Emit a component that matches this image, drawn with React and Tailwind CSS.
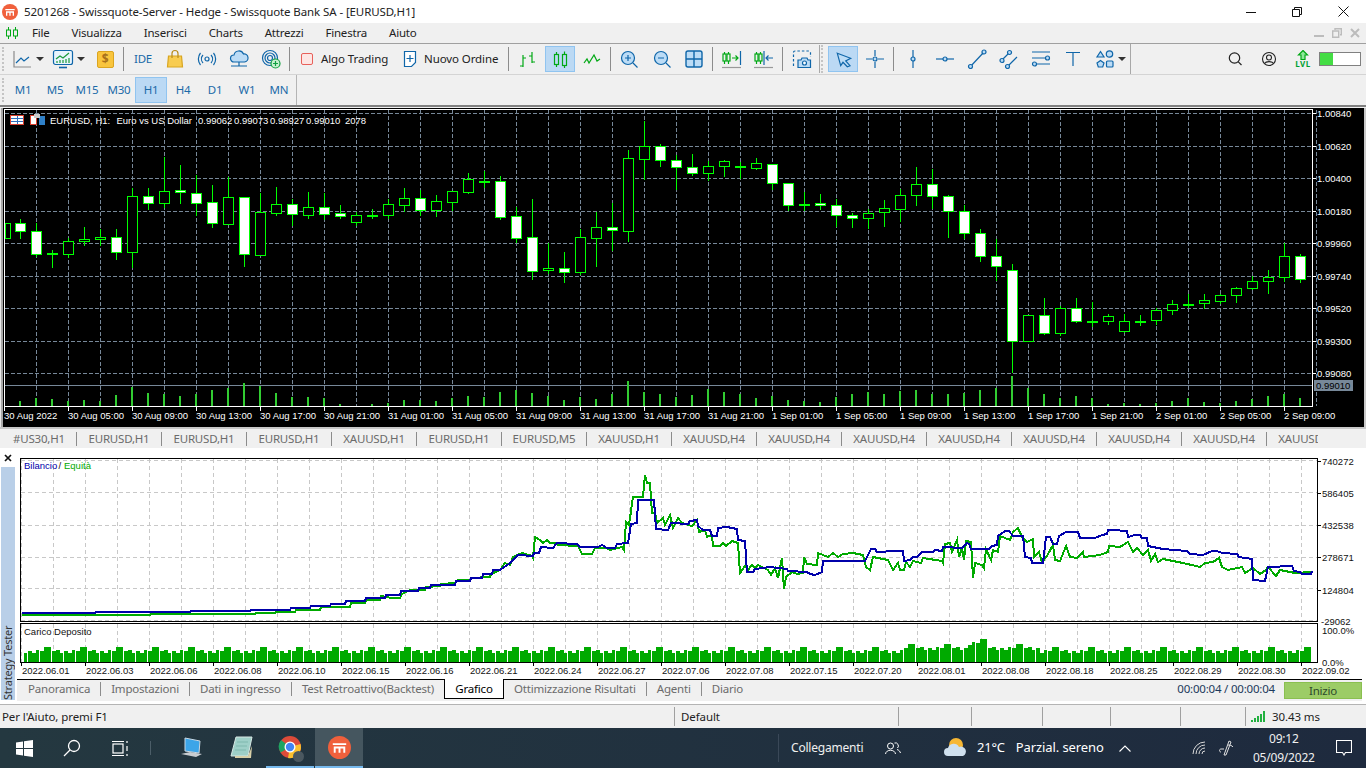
import { Fragment } from 'react'

const BLUE = '#0f66a9'
const SKY = '#bcdcf6'
const GREEN = '#00a814'

// [wick top, wick bottom, body top, body bottom, white]
const candles = [
  [223, 238, 223, 238, 0], [219, 238, 223, 231, 1], [223, 256, 231, 254, 1], [250, 267, 253, 253, 1], [238, 257, 241, 254, 0],
  [227, 245, 239, 241, 0], [229, 245, 237, 239, 0], [229, 259, 237, 252, 1], [188, 267, 196, 252, 0], [188, 209, 196, 203, 1],
  [157, 207, 191, 203, 0], [165, 203, 190, 192, 1], [175, 215, 193, 203, 1], [185, 227, 202, 223, 1], [177, 224, 197, 224, 0],
  [197, 266, 197, 254, 1], [193, 255, 212, 255, 0], [187, 215, 204, 213, 0], [199, 225, 204, 214, 1], [192, 218, 207, 215, 0],
  [193, 219, 207, 214, 1], [205, 218, 213, 216, 1], [212, 225, 215, 222, 0], [209, 218, 215, 215, 1], [199, 218, 204, 215, 0],
  [188, 211, 198, 205, 0], [190, 215, 198, 210, 1], [195, 216, 201, 210, 0], [191, 210, 191, 202, 0], [173, 193, 179, 192, 0],
  [171, 187, 181, 181, 1], [176, 219, 181, 217, 1], [207, 242, 216, 238, 1], [199, 279, 237, 271, 1], [243, 273, 268, 270, 0],
  [252, 282, 268, 272, 1], [229, 274, 237, 272, 0], [212, 266, 227, 238, 0], [203, 250, 227, 230, 1], [150, 241, 158, 231, 0],
  [121, 179, 146, 159, 0], [144, 166, 146, 160, 1], [155, 189, 160, 167, 1], [154, 175, 167, 173, 1], [161, 180, 166, 173, 0],
  [160, 176, 161, 166, 0], [162, 178, 166, 166, 1], [158, 169, 163, 168, 0], [164, 189, 164, 183, 1], [183, 210, 183, 205, 1],
  [192, 210, 204, 204, 1], [194, 209, 203, 205, 1], [199, 226, 205, 215, 1], [213, 227, 215, 218, 1], [209, 228, 213, 218, 0],
  [200, 226, 208, 212, 0], [189, 221, 195, 209, 0], [167, 205, 184, 195, 0], [169, 208, 184, 196, 1], [195, 237, 196, 211, 1],
  [205, 238, 211, 233, 1], [229, 261, 233, 256, 1], [239, 280, 256, 266, 1], [264, 372, 270, 341, 1], [315, 341, 315, 341, 0],
  [298, 334, 315, 333, 1], [306, 335, 308, 333, 0], [298, 322, 308, 321, 1], [302, 326, 321, 321, 0], [314, 324, 316, 321, 0],
  [314, 332, 321, 331, 0], [315, 325, 321, 321, 1], [308, 324, 310, 320, 0], [300, 314, 304, 310, 0], [294, 307, 304, 304, 1],
  [294, 308, 300, 303, 0], [294, 303, 295, 301, 0], [287, 302, 288, 295, 0], [276, 289, 281, 288, 0], [270, 293, 277, 281, 0],
  [243, 281, 256, 277, 0], [254, 282, 256, 279, 1],
]

const volumes = [
  0, 5, 8, 7, 5, 6, 5, 11, 19, 13, 12, 10, 12, 16, 18, 23, 20, 13, 9, 9, 8, 2, 0, 2, 3, 6, 6, 5,
  8, 10, 9, 14, 16, 13, 10, 6, 9, 7, 12, 25, 14, 12, 9, 11, 17, 14, 12, 8, 10, 6, 5, 4, 9, 12, 14,
  12, 15, 16, 12, 12, 13, 16, 18, 30, 18, 12, 8, 10, 8, 2, 3, 2, 3, 5, 8, 4, 3, 5, 7, 10, 12, 8,
]

const priceLabels = [
  [113, '1.00840'], [146, '1.00620'], [178, '1.00400'], [211, '1.00180'], [243, '0.99960'],
  [276, '0.99740'], [308, '0.99520'], [341, '0.99300'], [373, '0.99080'],
]

const timeLabels = [
  '30 Aug 2022', '30 Aug 05:00', '30 Aug 09:00', '30 Aug 13:00', '30 Aug 17:00', '30 Aug 21:00', '31 Aug 01:00',
  '31 Aug 05:00', '31 Aug 09:00', '31 Aug 13:00', '31 Aug 17:00', '31 Aug 21:00', '1 Sep 01:00', '1 Sep 05:00',
  '1 Sep 09:00', '1 Sep 13:00', '1 Sep 17:00', '1 Sep 21:00', '2 Sep 01:00', '2 Sep 05:00', '2 Sep 09:00',
]

const chartTabs = ['#US30,H1', 'EURUSD,H1', 'EURUSD,H1', 'EURUSD,H1', 'XAUUSD,H1', 'EURUSD,H1', 'EURUSD,M5', 'XAUUSD,H1', 'XAUUSD,H4', 'XAUUSD,H4', 'XAUUSD,H4', 'XAUUSD,H4', 'XAUUSD,H4', 'XAUUSD,H4', 'XAUUSD,H4', 'XAUUSD,H4']

const dateLabels = ['06.01', '06.03', '06.06', '06.08', '06.10', '06.15', '06.16', '06.21', '06.24', '06.27', '07.06', '07.08', '07.15', '07.20', '08.01', '08.08', '08.18', '08.25', '08.29', '08.30', '09.02']

const balance = '22,613 95,613 96,612 190,612 191,611 250,611 251,610 290,610 291,608 310,608 311,606 330,606 331,604 345,604 346,601 365,601 366,598 385,598 386,595 400,595 401,591 418,591 419,588 430,588 431,585 455,585 456,581 470,581 471,578 482,578 483,574 492,574 493,570 500,570 510,563 518,555 533,556 534,553 539,553 541,547 553,548 557,543 577,544 580,547 598,547 602,545 607,548 615,548 617,544 628,543 631,524 637,523 638,500 654,500 656,529 668,530 671,523 688,524 690,521 697,520 698,526 703,530 710,530 712,536 717,536 718,528 727,527 737,529 738,540 745,541 747,572 753,572 755,569 770,567 787,569 788,571 807,572 810,574 815,575 822,572 823,561 865,561 868,555 871,549 875,549 877,552 885,552 887,551 903,551 904,561 910,560 913,557 917,557 922,552 933,552 935,550 942,551 943,547 962,548 967,543 969,544 971,549 989,549 992,546 997,545 998,536 1005,531 1009,531 1013,536 1023,536 1025,557 1031,558 1032,563 1043,563 1046,537 1050,537 1053,544 1057,544 1059,536 1066,532 1078,532 1080,538 1095,538 1102,535 1107,534 1108,530 1113,530 1127,531 1128,537 1135,535 1140,535 1142,538 1147,538 1148,546 1153,547 1163,549 1187,551 1190,554 1203,555 1212,551 1217,551 1222,553 1237,554 1239,557 1252,559 1253,580 1265,581 1268,567 1292,566 1294,571 1300,572 1302,574 1311,574 1312,571'

const equity = '22,615 150,615 151,614 255,614 256,613 275,613 276,612 295,612 296,610 320,610 321,607 350,607 351,603 365,603 366,600 380,600 381,596 392,598 400,598 402,594 410,590 425,590 426,587 440,586 441,584 455,583 458,580 470,580 471,578 490,577 491,574 500,570 505,563 510,565 513,557 522,553 532,556 533,558 535,537 540,540 543,543 547,540 550,543 557,543 558,545 578,546 582,554 592,554 595,548 607,548 610,550 622,547 624,550 626,522 629,525 633,497 643,497 645,475 647,483 650,483 652,513 655,513 657,523 663,518 665,525 670,515 673,528 678,518 682,523 692,526 697,520 699,532 705,530 707,537 712,535 713,546 720,546 723,543 726,546 732,541 738,543 740,573 745,566 748,570 752,565 755,568 758,565 768,570 771,575 775,568 778,578 782,558 784,589 786,577 792,572 797,574 803,573 804,557 807,564 817,565 818,553 828,557 833,553 838,557 843,554 853,553 863,555 866,567 870,570 873,557 888,560 893,570 898,563 900,570 904,570 906,562 910,567 913,561 921,563 923,558 942,561 943,563 945,544 950,543 952,552 957,540 959,557 962,548 964,560 966,541 971,542 973,578 975,563 982,565 984,568 986,549 991,560 993,550 998,552 1000,536 1010,540 1013,532 1018,528 1022,537 1027,542 1033,539 1034,557 1039,552 1042,562 1047,556 1053,545 1055,560 1060,561 1066,546 1070,557 1077,558 1083,552 1084,557 1100,555 1108,552 1109,546 1120,547 1128,542 1133,552 1137,548 1143,555 1148,550 1151,561 1155,554 1158,562 1163,559 1183,563 1200,567 1205,563 1213,562 1219,558 1222,567 1228,570 1242,567 1245,573 1253,568 1260,574 1266,570 1268,567 1276,576 1280,570 1295,573 1312,572'

// carico deposito: fixed pseudo random heights, only the shape matters
const loadBars = Array.from({ length: 322 }, (_, i) => {
  const x = 24 + i * 4
  let h = 9 + ((i * i * 7 + i * 13) % 9)
  if (x > 965 && x < 985) h += 8
  else if (x > 900 && x < 1040) h += 3
  return { x, h }
})

function Ico({ children, w = 20, h = 20 }) {
  return (
    <svg width={w} height={h} viewBox={`0 0 ${w} ${h}`} fill="none" stroke={BLUE} strokeWidth="1.2">
      {children}
    </svg>
  )
}

function Btn({ children, active }) {
  return (
    <div className={`w-8 h-[26px] flex items-center justify-center ${active ? 'bg-[#bbd9f4] border border-[#90c4f0]' : ''}`}>
      {children}
    </div>
  )
}

function Sep() {
  return <div className="w-px h-[24px] bg-[#8c8c8c]" />
}

function Caret() {
  return <div className="w-0 h-0 border-x-[4px] border-x-transparent border-t-[4px] border-t-[#333]" />
}

function Grip() {
  return <div className="w-[2px] h-[24px] ml-[2px] border-l-2 border-dotted border-[#c4c4c4]" />
}

function Dot({ cx, cy }) {
  return <circle cx={cx} cy={cy} r="2" fill={SKY} />
}

function ToolbarOne() {
  return (
    <div className="h-[30px] flex items-center border-t border-[#a0a0a0] box-content">
      <div className="w-[8px] flex"><Grip /></div>
      <div className="w-[27px] flex justify-center">
        <Ico>
          <path d="M2 2v16h17" stroke="#8c8c8c" />
          <path d="M4 14l5-5 3 3 5-4" />
        </Ico>
      </div>
      <div className="w-[10px] flex justify-center"><Caret /></div>
      <div className="w-[27px] ml-[4px] flex justify-center">
        <Ico w={22}>
          <rect x="1.5" y="1.5" width="19" height="14" rx="2" fill="#e8f4fd" />
          <path d="M4 10l4-3 3 2 6-5" stroke="#1a9a3a" />
          <path d="M5 14v-2M8 14v-3M11 14v-3M14 14v-4M17 14v-5" stroke="#1a9a3a" />
          <path d="M7 18.500h8" strokeWidth="1.6" />
        </Ico>
      </div>
      <div className="w-[10px] flex justify-center"><Caret /></div>
      <div className="ml-[3px]"><Btn>
        <div className="w-[17px] h-[17px] rounded-[2px] bg-[#f9c53d] border border-[#dba520] flex items-center justify-center text-[#a8701a] text-[12px] font-bold">$</div>
      </Btn></div>
      <div className="ml-[2px]"><Sep /></div>
      <div className="ml-[3px]"><Btn><span className="text-[11.5px] text-[#1a6aa8]">IDE</span></Btn></div>
      <Btn>
        <Ico>
          <path d="M3.5 7h13l1 11h-15z" fill="#f8cc50" stroke="#d8a520" />
          <path d="M7 9V4.5a3 3 0 0 1 6 0V9" stroke="#b88a18" />
        </Ico>
      </Btn>
      <Btn>
        <Ico>
          <circle cx="10" cy="10" r="2" />
          <path d="M6 6a6 6 0 0 0 0 8M14 6a6 6 0 0 1 0 8M3.5 4a9.5 9.5 0 0 0 0 12M16.5 4a9.5 9.5 0 0 1 0 12" />
        </Ico>
      </Btn>
      <Btn>
        <Ico>
          <path d="M5 13a3.5 3.5 0 0 1 0-7 5 5 0 0 1 9.5-1 4 4 0 0 1 1 8z" fill={SKY} />
          <path d="M10 13v4M2 17h16" />
        </Ico>
      </Btn>
      <Btn>
        <Ico>
          <circle cx="9" cy="9" r="7.5" />
          <circle cx="9" cy="9" r="5" />
          <circle cx="9" cy="9" r="2.5" />
          <circle cx="14.5" cy="14.5" r="4.5" fill="#c8f0d0" stroke="#10a040" />
          <path d="M14.5 12v5M12 14.5h5" stroke="#10a040" />
        </Ico>
      </Btn>
      <div className="ml-[2px]"><Sep /></div>
      <div className="w-3 h-3 ml-[11px] rounded-[2px] bg-[#fde6e4] border border-[#e8605a]" />
      <span className="w-[67px] ml-2 text-[11.5px] tracking-[-0.1px] text-[#222] whitespace-nowrap">Algo Trading</span>
      <div className="ml-[14px]">
        <Ico w={16} h={20}>
          <path d="M2.5 2.5h11v11l-4 4h-7z" fill="#fff" />
          <path d="M8 6v7M4.5 9.5h7" />
        </Ico>
      </div>
      <span className="w-[75px] ml-[6px] text-[11.5px] tracking-[-0.1px] text-[#222] whitespace-nowrap">Nuovo Ordine</span>
      <div className="ml-[9px]"><Sep /></div>
      <div className="ml-[3px]"><Btn>
        <Ico>
          <path d="M5 6v12M2 17h3M5 9h3M14 3v11M11 7h3M14 13h3" stroke={GREEN} />
        </Ico>
      </Btn></div>
      <div className="w-[30px] h-[26px] ml-px bg-[#bbd9f4] border border-[#90c4f0] flex items-center justify-center">
        <Ico>
          <rect x="4.500" y="5.500" width="4" height="10" stroke={GREEN} />
          <rect x="12.500" y="5.500" width="4" height="11" stroke={GREEN} />
          <path d="M6.500 3v2.500M6.500 15.500V18M14.500 2.500v3M14.500 16.500V19" stroke={GREEN} />
        </Ico>
      </div>
      <div className="ml-px"><Btn>
        <Ico>
          <path d="M2 14l3-4 2 4 5-8 3 6 3-2" stroke={GREEN} />
        </Ico>
      </Btn></div>
      <div className="ml-[2px]"><Sep /></div>
      <div className="ml-[2px]"><Btn>
        <Ico>
          <circle cx="9" cy="9" r="6.5" fill={SKY} />
          <path d="M14 14l4.5 4.5M6 9h6M9 6v6" />
        </Ico>
      </Btn></div>
      <div className="ml-px"><Btn>
        <Ico>
          <circle cx="9" cy="9" r="6.5" fill={SKY} />
          <path d="M14 14l4.5 4.5M6 9h6" />
        </Ico>
      </Btn></div>
      <Btn>
        <Ico>
          <rect x="2" y="2" width="16" height="16" rx="2" fill={SKY} strokeWidth="1.4" />
          <path d="M10 2v16M2 10h16" strokeWidth="1.4" />
        </Ico>
      </Btn>
      <div className="ml-[2px]"><Sep /></div>
      <div className="ml-[3px]"><Btn>
        <Ico>
          <path d="M2.500 3v2M2.500 12v3M6.500 3v2M6.500 12v3" stroke={GREEN} />
          <rect x="1" y="5" width="3" height="7" stroke={GREEN} />
          <rect x="5" y="5" width="3" height="7" stroke={GREEN} />
          <path d="M10 9h6M13.500 6.500L16 9l-2.500 2.500" stroke={GREEN} />
          <path d="M18.500 2v14" />
          <path d="M0 18.500h19" stroke="#999" />
        </Ico>
      </Btn></div>
      <Btn>
        <Ico>
          <path d="M2.500 3v2M2.500 12v3M6.500 3v2M6.500 12v3" stroke={GREEN} />
          <rect x="1" y="5" width="3" height="7" stroke={GREEN} />
          <rect x="5" y="5" width="3" height="7" stroke={GREEN} />
          <path d="M10 2v14" />
          <path d="M12 9h7M14.500 6.500L12 9l2.500 2.500" />
          <path d="M0 18.500h19" stroke="#999" />
        </Ico>
      </Btn>
      <div className="ml-[2px]"><Sep /></div>
      <div className="ml-[3px]"><Btn>
        <Ico>
          <path d="M1.500 17V3.500A1.500 1.500 0 0 1 3 2h14a1.500 1.500 0 0 1 1.500 1.500V8" strokeDasharray="2.500 2" />
          <path d="M6 18.500V11h3l1-2h5l1 2h2.500v7.500z" fill={SKY} />
          <circle cx="12.500" cy="14" r="2" fill="#fff" />
        </Ico>
      </Btn></div>
      <div className="w-[5px] h-[28px] ml-px border-l border-[#a8a8a8] flex"><div className="w-[2px] h-full ml-px border-l-2 border-dotted border-[#c4c4c4]" /></div>
      <div className="w-[30px] h-[26px] ml-[4px] bg-[#bbd9f4] border border-[#90c4f0] flex items-center justify-center">
        <Ico>
          <path d="M4.300 4.300L17.700 9.300 12.700 12 17 16.700 14.300 17.700 10 13.300 7.700 16.700z" fill={SKY} />
        </Ico>
      </div>
      <div className="ml-px"><Btn>
        <Ico>
          <path d="M10 1v6M10 13v6M1 10h6M13 10h6" />
          <Dot cx={10} cy={10} />
        </Ico>
      </Btn></div>
      <div className="ml-[2px]"><Sep /></div>
      <div className="ml-[3px]"><Btn>
        <Ico>
          <path d="M10 1v18" />
          <Dot cx={10} cy={10} />
        </Ico>
      </Btn></div>
      <Btn>
        <Ico>
          <path d="M1 10h18" />
          <Dot cx={10} cy={10} />
        </Ico>
      </Btn>
      <Btn>
        <Ico>
          <path d="M3 18L17 3" />
          <Dot cx={3.5} cy={17.5} />
          <Dot cx={17} cy={3} />
        </Ico>
      </Btn>
      <Btn>
        <Ico>
          <path d="M2 12l9-9M8 18l10-10" />
          <Dot cx={3} cy={11.5} />
          <Dot cx={10.5} cy={3.5} />
          <Dot cx={8.5} cy={17.5} />
        </Ico>
      </Btn>
      <Btn>
        <Ico>
          <path d="M1 3h18M1 9h18M1 15h18" />
          <Dot cx={16.5} cy={9} />
          <Dot cx={3.5} cy={15} />
        </Ico>
      </Btn>
      <Btn>
        <Ico>
          <path d="M3 3.500h14M10 3.500V17" />
        </Ico>
      </Btn>
      <Btn>
        <Ico>
          <path d="M5.500 2.500L9 8H2z" fill={SKY} />
          <circle cx="14.500" cy="5" r="3.200" fill={SKY} />
          <path d="M5.500 11.500L9 14l-1.300 4H3.300L2 14z" fill={SKY} />
          <rect x="11.500" y="12" width="6.500" height="6" rx="1" fill={SKY} />
        </Ico>
      </Btn>
      <div className="w-[10px] -ml-1 flex justify-center"><Caret /></div>
      <div className="w-px h-[30px] ml-[3px] bg-[#a8a8a8]" />
      <div className="ml-auto flex items-center gap-[2px] pr-[5px]">
        <Btn>
          <Ico>
            <g stroke="#222" strokeWidth="1.2">
              <circle cx="9.500" cy="9" r="5.200" />
              <path d="M13.300 12.800L16.500 16" />
            </g>
          </Ico>
        </Btn>
        <Btn>
          <Ico>
            <g stroke="#222" strokeWidth="1.1">
              <circle cx="10" cy="10" r="6.500" />
              <circle cx="10" cy="8.500" r="2.500" />
              <path d="M5.500 14.500c1.500-2.500 7.500-2.500 9 0" />
            </g>
          </Ico>
        </Btn>
        <Btn>
          <div className="flex flex-col items-center leading-none">
            <Ico w={12} h={10}>
              <path d="M6 .5L10.500 5H8v4.500H4V5H1.500z" fill="#8ee89a" stroke={GREEN} />
            </Ico>
            <span className="text-[8px] font-bold text-[#00a030] tracking-[.5px]">LVL</span>
          </div>
        </Btn>
        <div className="w-[42px] h-[14px] -ml-[2px] bg-white border border-[#808080] flex">
          <div className="w-[13px] h-full bg-[#44dd44]" />
        </div>
      </div>
    </div>
  )
}

function ToolbarTwo() {
  const frames = ['M1', 'M5', 'M15', 'M30', 'H1', 'H4', 'D1', 'W1', 'MN']
  return (
    <div className="h-[30px] flex items-center border-t border-[#d4d4d4] box-content">
      <div className="w-[7px] flex"><Grip /></div>
      {frames.map(f => (
        <Btn key={f} active={f === 'H1'}><span className="text-[11.5px] text-[#1a6aa8]">{f}</span></Btn>
      ))}
      <div className="w-px h-[30px] ml-px bg-[#b4b4b4]" />
    </div>
  )
}

function PriceChart() {
  const vLines = Array.from({ length: 41 }, (_, i) => 36 + i * 32)
  const hLines = priceLabels.map(p => p[0])
  return (
    <div className="flex-1 h-[319px] bg-black">
      <svg width="1361" height="319" viewBox="3 108 1361 319" shapeRendering="crispEdges" className="block">
        <g stroke="#778899" strokeDasharray="4 2">
          {vLines.map(x => <line key={x} x1={x + 0.5} y1="110" x2={x + 0.5} y2="406" />)}
          {hLines.map(y => <line key={y} x1="5" y1={y + 0.5} x2="1312" y2={y + 0.5} />)}
        </g>
        <line x1="4" y1="385.5" x2="1312" y2="385.5" stroke="#778899" />

        {candles.map(([wt, wb, bt, bb, white], i) => {
          const x = 4 + i * 16
          return (
            <g key={i} stroke="#00ff00">
              <line x1={x + 0.5} y1={wt} x2={x + 0.5} y2={wb + 1} />
              <rect x={x < 5 ? 5 : x - 4.5} y={bt + 0.5} width={x < 5 ? 5 : 10} height={Math.max(bb - bt, 1)} fill={white ? '#fff' : '#000'} />
            </g>
          )
        })}
        {volumes.map((v, i) => v > 0 && (
          <rect key={i} x={3 + i * 16} y={406 - v} width="2" height={v} fill="#32cd32" />
        ))}

        <path d="M4.500 109v297.500H1312.500V109" stroke="#fff" fill="none" />
        <line x1="4" y1="109.5" x2="1312" y2="109.5" stroke="#fff" />
        {hLines.map(y => <line key={y} x1="1312" y1={y + 0.5} x2="1316" y2={y + 0.5} stroke="#fff" />)}
        {timeLabels.map((t, i) => <line key={i} x1={4.5 + i * 64} y1="406" x2={4.5 + i * 64} y2="411" stroke="#fff" />)}

        <g shapeRendering="auto" className="font-['Liberation_Sans',sans-serif] text-[9.5px] tracking-normal" fill="#fff">
          {priceLabels.map(([y, t]) => <text key={y} x="1317" y={y + 3.5}>{t}</text>)}
          {timeLabels.map((t, i) => <text key={i} x={4 + i * 64} y="418.5">{t}</text>)}
          <rect x="1314" y="380" width="39" height="11" fill="#778899" />
          <text x="1316" y="389" fill="#000">0.99010</text>
          <text x="50" y="124">EURUSD, H1:</text>
          <text x="116.5" y="124">Euro vs US Dollar</text>
          <text x="198" y="124">0.99062</text>
          <text x="234" y="124">0.99073</text>
          <text x="270" y="124">0.98927</text>
          <text x="306" y="124">0.99010</text>
          <text x="345" y="124">2078</text>
        </g>

        {/* one click buttons and depth icons, top left */}
        <rect x="10.5" y="115.5" width="13" height="9" fill="#fff" stroke="#d84030" />
        <path d="M17 116v8M11 118.500h12M11 121h12" stroke="#3070c0" />
        <rect x="30.5" y="115.5" width="6" height="9" fill="#fff" stroke="#d84030" />
        <rect x="38.5" y="115.5" width="6" height="9" fill="#2f80c8" />
        <rect x="34" y="114" width="6" height="4" fill="#ccc" />
      </svg>
    </div>
  )
}

function ChartTabs() {
  return (
    <div className="h-[19px] flex items-center border-t-2 border-[#c8c8c8] box-content border-b border-b-white">
      <div className="w-[1318px] flex pl-[2px] overflow-hidden">
        {chartTabs.map((t, i) => (
          <span key={i} className="shrink-0 w-[85px] text-center leading-[14px] text-[11.5px] text-[#6b6b6b] whitespace-nowrap border-r border-[#8c8c8c] first:w-[75px]">{t}</span>
        ))}
      </div>
    </div>
  )
}

function TesterChart() {
  const vLines = Array.from({ length: 41 }, (_, i) => 21 + i * 32)
  const hLines = [460, 492, 525, 557, 588, 620]
  return (
    <svg width="1349" height="230" viewBox="17 449 1349 230" shapeRendering="crispEdges" className="block">
      <g stroke="#c8c8c8" strokeDasharray="4 3">
        {vLines.map(x => <line key={x} x1={x + 0.5} y1="459" x2={x + 0.5} y2="621" />)}
        {vLines.map(x => <line key={x} x1={x + 0.5} y1="624" x2={x + 0.5} y2="662" />)}
        {hLines.map(y => <line key={y} x1="21" y1={y + 0.5} x2="1317" y2={y + 0.5} />)}
      </g>
      <g fill="none" strokeLinejoin="miter">
        <polyline points={equity} stroke="#00aa00" strokeWidth="2" />
        <polyline points={balance} stroke="#0000aa" strokeWidth="2" />
      </g>
      {loadBars.map(b => <rect key={b.x} x={b.x} y={662 - b.h} width={b.x % 12 === 0 ? 3 : 4} height={b.h} fill="#00aa00" />)}

      <rect x="20.5" y="458.5" width="1297" height="163" fill="none" stroke="#000" />
      <rect x="20.5" y="623.5" width="1297" height="39" fill="none" stroke="#000" />
      {[461, 493, 525, 557, 590].map(y => <line key={y} x1="1318" y1={y} x2="1321" y2={y} stroke="#000" />)}
      {dateLabels.map((d, i) => <line key={d} x1={21.5 + i * 64} y1="662" x2={21.5 + i * 64} y2="666" stroke="#000" />)}

      <g shapeRendering="auto" className="font-['Liberation_Sans',sans-serif] text-[9.5px] tracking-normal" fill="#111">
        <text x="24" y="469" fill="#0000aa">Bilancio</text>
        <text x="58.5" y="469">/</text>
        <text x="64" y="469" fill="#00aa00">Equità</text>
        <text x="24" y="635">Carico Deposito</text>
        <text x="1322" y="464.5">740272</text>
        <text x="1322" y="496.5">586405</text>
        <text x="1322" y="529">432538</text>
        <text x="1322" y="560.5">278671</text>
        <text x="1322" y="593.5">124804</text>
        <text x="1321" y="625">-29062</text>
        <rect x="1320" y="625" width="46" height="10" fill="#fff" />
        <text x="1322" y="633.5">100.0%</text>
        {dateLabels.map((d, i) => <text key={d} x={22 + i * 64} y="673.5">2022.{d}</text>)}
        <rect x="1320" y="659" width="46" height="6" fill="#fff" />
        <text x="1322" y="665.5">0.0%</text>
      </g>
    </svg>
  )
}

function TesterTabs() {
  const left = ['Panoramica', 'Impostazioni', 'Dati in ingresso', 'Test Retroattivo(Backtest)']
  const right = ['Ottimizzazione Risultati', 'Agenti', 'Diario']
  return (
    <div className="h-[22px] flex bg-[#f0f0f0] border-t border-black box-border pb-[3px] mr-[4px]">
      <div className="flex items-center pl-[1px]">
        {left.map((t, i) => (
          <Fragment key={t}>
            <span className="px-[10px] text-[11.5px] text-[#6b6b6b] whitespace-nowrap">{t}</span>
            {i < left.length - 1 && <div className="w-px h-[14px] bg-[#8c8c8c]" />}
          </Fragment>
        ))}
      </div>
      <div className="w-[60px] -mt-px h-[20px] bg-white border-x border-b border-black flex items-center justify-center text-[11.5px] text-black">Grafico</div>
      <div className="flex items-center">
        {right.map((t, i) => (
          <Fragment key={t}>
            <span className="px-[10px] text-[11.5px] text-[#6b6b6b] whitespace-nowrap">{t}</span>
            {i < right.length - 1 && <div className="w-px h-[14px] bg-[#8c8c8c]" />}
          </Fragment>
        ))}
      </div>
      <span className="ml-auto text-[11.5px] text-[#1c3a5c] self-center whitespace-nowrap">00:00:04 / 00:00:04</span>
      <div className="w-[78px] h-[17px] ml-[9px] mt-[2px] bg-[#9ccc66] border border-[#8abf50] flex items-center justify-center text-[11.5px] text-[#2c4a2c]">Inizio</div>
    </div>
  )
}

function StatusBar() {
  return (
    <div className="h-[24px] flex items-center border-t border-[#b4b4b4] text-[11.5px] tracking-[-0.1px] text-[#222]">
      <span className="w-[674px] pl-[2px]">Per l'Aiuto, premi F1</span>
      <span className="w-[224px] h-[19px] pl-[6px] border-l border-[#a0a0a0] leading-[19px]">Default</span>
      <div className="w-[73px] h-[19px] border-l border-[#a0a0a0]" />
      <div className="w-[71px] h-[19px] border-l border-[#a0a0a0]" />
      <div className="w-[68px] h-[19px] border-l border-[#a0a0a0]" />
      <div className="w-[70px] h-[19px] border-l border-[#a0a0a0]" />
      <div className="w-[65px] h-[19px] border-l border-[#a0a0a0]" />
      <div className="h-[19px] pl-[5px] border-l border-[#a0a0a0] flex items-center gap-[6px]">
        <svg width="15" height="12" viewBox="0 0 15 12" fill="#22b040">
          <rect x="0" y="9" width="2" height="2" />
          <rect x="3" y="7" width="2" height="4" />
          <rect x="6" y="5" width="2" height="6" />
          <rect x="9" y="3" width="2" height="8" />
          <rect x="12" y="0" width="2" height="11" />
        </svg>
        <span>30.43 ms</span>
      </div>
    </div>
  )
}

function Logo({ size }) {
  return (
    <svg width={size} height={size} viewBox="0 0 24 24">
      <circle cx="12" cy="12" r="12" fill="#f0603c" />
      <path d="M5 7.500h14v2H5zM6 11h12v6.500h-2V13h-3v4.500h-2V13H8v4.500H6z" fill="#fff" />
    </svg>
  )
}

function Taskbar() {
  return (
    <div className="h-10 flex items-center bg-linear-to-r from-[#243840] to-[#1e2a3e] text-white">
      <div className="w-[48px] h-10 flex items-center justify-center">
        <svg width="17" height="17" viewBox="0 0 17 17" fill="#fff">
          <path d="M0 2.500L7 1.500V8H0zM8 1.300L17 0v8H8zM0 9h7v6.500L0 14.500zM8 9h9v8l-9-1.300z" />
        </svg>
      </div>
      <div className="w-[48px] h-10 flex items-center justify-center">
        <svg width="18" height="18" viewBox="0 0 18 18" fill="none" stroke="#fff" strokeWidth="1.3">
          <circle cx="11" cy="7" r="5.500" />
          <path d="M7 11l-6 6" />
        </svg>
      </div>
      <div className="w-[48px] h-10 flex items-center justify-center">
        <svg width="17" height="17" viewBox="0 0 17 17" fill="none" stroke="#fff" strokeWidth="1.2">
          <rect x="1" y="4" width="10" height="9" />
          <path d="M0 1.500h12M0 15.500h12M15 1v2M15 6v5M15 14v2" />
        </svg>
      </div>
      <div className="w-px h-[14px] ml-[6px] bg-[#4c5e68]" />
      <div className="w-[48px] h-10 ml-[17px] flex items-center justify-center">
        <svg width="24" height="22" viewBox="0 0 24 22">
          <path d="M5 1l15 3-1 12-14-2z" fill="#3ca5e8" stroke="#c8d8e4" />
          <path d="M1 17l9-2 12 2-6 3z" fill="#c8ccd0" />
        </svg>
      </div>
      <div className="w-[50px] h-10 flex items-center justify-center">
        <svg width="24" height="24" viewBox="0 0 24 24">
          <path d="M7 1h16L19 20H2z" fill="#9ed0c8" stroke="#d8e8e4" />
          <path d="M6 20h13l4-10 -1 12H6z" fill="#d8d0a8" />
          <path d="M8 6h11M7 10h11M6 14h11" stroke="#6aa8a0" strokeWidth=".6" />
        </svg>
      </div>
      <div className="w-[48px] h-10 relative flex items-center justify-center border-b-[2px] border-[#76b9ed] box-border">
        <svg width="24" height="24" viewBox="0 0 24 24">
          <circle cx="12" cy="12" r="11" fill="#dd4b39" />
          <path d="M12 12L2.500 17.500A11 11 0 0 1 3 5z" fill="#1da462" />
          <path d="M12 12l10.500-3A11 11 0 0 1 10 23z" fill="#fbc02d" />
          <circle cx="12" cy="12" r="5.500" fill="#fff" />
          <circle cx="12" cy="12" r="4.200" fill="#4285f4" />
        </svg>
        <div className="absolute left-[27px] top-[23px] w-[11px] h-[11px] rounded-full bg-[#4a5860]" />
      </div>
      <div className="w-[48px] h-10 ml-[1px] flex items-center justify-center bg-[#45565f] border-b-[2px] border-[#76b9ed] box-border">
        <Logo size={23} />
      </div>
      <div className="w-px h-[28px] ml-[415px] bg-[#3a4858]" />
      <span className="ml-[12px] text-[12px] w-[74px] text-[#f0f0f0] whitespace-nowrap">Collegamenti</span>
      <div className="ml-[20px] w-[16px]">
        <svg width="16" height="16" viewBox="0 0 16 16" fill="none" stroke="#fff" strokeWidth="1">
          <circle cx="5.500" cy="6" r="3" />
          <path d="M0.500 14c.5-5 9.500-5 10 0M9.500 3a3 3 0 0 1 3 5M12 9.500c2 .5 3 2 3.500 3.500" />
        </svg>
      </div>
      <div className="ml-[43px] w-[26px]">
        <svg width="24" height="22" viewBox="0 0 24 22">
          <circle cx="12" cy="8" r="7" fill="#f7b733" />
          <path d="M4 19a4 4 0 0 1 0-8 6 6 0 0 1 11-1 4.500 4.500 0 0 1 4 9z" fill="#cfe0ee" />
        </svg>
      </div>
      <span className="ml-[7px] text-[13px] whitespace-nowrap">21°C</span>
      <span className="ml-[11px] w-[87px] text-[13px] tracking-[-0.1px] whitespace-nowrap">Parzial. sereno</span>
      <div className="ml-[16px] w-[12px]">
        <svg width="12" height="7" viewBox="0 0 12 7" fill="none" stroke="#fff" strokeWidth="1.1"><path d="M.5 6.500l5.500-5.500 5.500 5.500" /></svg>
      </div>
      <div className="ml-[61px] w-[14px]">
        <svg width="14" height="14" viewBox="0 0 14 14" fill="none" stroke="#d8d8d8" strokeWidth="1">
          <path d="M1 13A12 12 0 0 1 13 1M4 13a9 9 0 0 1 9-9M7 13a6 6 0 0 1 6-6M10 13a3 3 0 0 1 3-3" />
        </svg>
      </div>
      <div className="ml-[12px] w-[16px]">
        <svg width="16" height="16" viewBox="0 0 16 16" fill="none" stroke="#e0e0e0" strokeWidth="1">
          <path d="M3 12c-2 0-2-3 0-3h3M6 15L11 1l2 1-5 13zM10 5c2 0 4 .5 5 2" />
        </svg>
      </div>
      <div className="w-[70px] ml-[15px] flex flex-col items-center text-[12px] leading-[19px] text-[#f0f0f0]">
        <span>09:12</span>
        <span>05/09/2022</span>
      </div>
      <div className="ml-[17px] w-[16px]">
        <svg width="16" height="16" viewBox="0 0 16 16" fill="none" stroke="#fff" strokeWidth="1.1">
          <path d="M.5.500h15v12H9.500L8 15l-1.500-2.500H.5z" />
        </svg>
      </div>
    </div>
  )
}

export default function App() {
  return (
    <div className="w-[1366px] h-[768px] flex flex-col overflow-hidden bg-[#f0f0f0] font-['Noto_Sans',sans-serif] tracking-[-0.2px]">
      {/* title bar */}
      <div className="h-[23px] flex items-center bg-white">
        <div className="ml-[2px] w-[22px]"><Logo size={16} /></div>
        <span className="text-[11.5px] tracking-[-0.1px] text-[#222] whitespace-nowrap">5201268 - Swissquote-Server - Hedge - Swissquote Bank SA - [EURUSD,H1]</span>
        <div className="ml-auto flex items-center">
          <div className="w-[46px] flex justify-center"><svg width="10" height="10" viewBox="0 0 10 10" stroke="#111"><path d="M0 5.500h10" /></svg></div>
          <div className="w-[46px] flex justify-center">
            <svg width="10" height="10" viewBox="0 0 10 10" stroke="#111" fill="none"><path d="M2.500 2.500V.5h7v7h-2M.5 2.500h7v7h-7z" /></svg>
          </div>
          <div className="w-[46px] flex justify-center"><svg width="11" height="11" viewBox="0 0 11 11" stroke="#111"><path d="M.5.500l10 10M10.500.5l-10 10" /></svg></div>
        </div>
      </div>

      {/* menu */}
      <div className="h-[20px] flex items-center text-[11.5px] text-[#222]">
        <div className="w-[21px] flex justify-center pl-[3px]">
          <svg width="14" height="14" viewBox="0 0 14 14" fill="none" stroke={GREEN}>
            <path d="M3.500 1v12M10.500 1v12" />
            <rect x="1.5" y="4" width="4" height="6" fill="#f0f0f0" />
            <rect x="8.5" y="4" width="4" height="6" fill="#f0f0f0" />
          </svg>
        </div>
        {['File', 'Visualizza', 'Inserisci', 'Charts', 'Attrezzi', 'Finestra', 'Aiuto'].map(m => (
          <span key={m} className="px-[11px]">{m}</span>
        ))}
        <div className="ml-auto flex items-center gap-[8px] pr-[6px]">
          <div className="w-[10px] h-[2px] mt-[6px] bg-[#bcbcbc]" />
          <svg width="10" height="10" viewBox="0 0 10 10" fill="none" stroke="#bcbcbc" strokeWidth="1.4"><path d="M3 2V.7h6.300v6H8M.7 3h6v6.300h-6z" /></svg>
          <svg width="10" height="10" viewBox="0 0 10 10" stroke="#bcbcbc" strokeWidth="2"><path d="M1 1l8 8M9 1l-8 8" /></svg>
        </div>
      </div>

      <ToolbarOne />
      <ToolbarTwo />

      {/* chart window */}
      <div className="flex pt-[1px] border-t-2 border-[#808080] box-content">
        <div className="w-[3px] bg-[#a8a8a8] border-l border-[#e8e8e8]" />
        <PriceChart />
        <div className="w-[2px] bg-[#c8c8c8]" />
      </div>
      <ChartTabs />

      {/* strategy tester */}
      <div className="h-[255px] flex bg-white">
        <div className="w-[17px] flex flex-col pl-px">
          <div className="h-[18px] flex items-center justify-center pr-[2px]">
            <svg width="8" height="8" viewBox="0 0 8 8" stroke="#111" strokeWidth="1.7"><path d="M1 1l6 6M7 1L1 7" /></svg>
          </div>
          <div className="w-[14px] flex-1 bg-[#b9cfe8] rotate-180 flex">
            <span className="[writing-mode:vertical-rl] text-[11px] text-[#333] leading-[14px] whitespace-nowrap">Strategy Tester</span>
          </div>
          <div className="h-[4px]" />
        </div>
        <div className="flex-1 flex flex-col">
          <TesterChart />
          <TesterTabs />
        </div>
      </div>

      <StatusBar />
      <Taskbar />
    </div>
  )
}
